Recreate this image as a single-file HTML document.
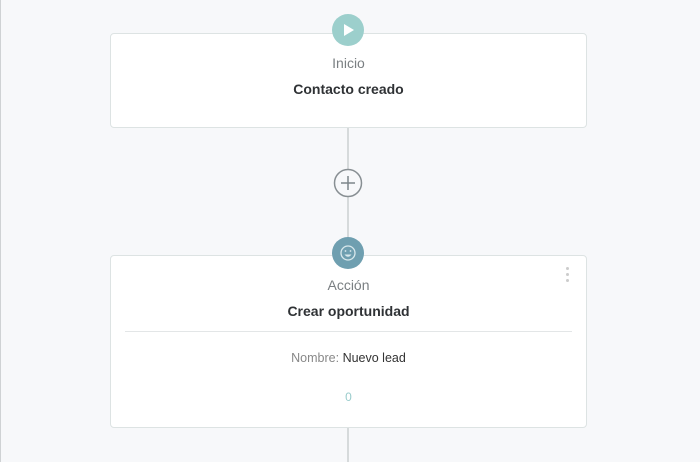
<!DOCTYPE html>
<html><head><style>
body{margin:0;width:700px;height:462px;background:#f7f8fa;position:relative;overflow:hidden;font-family:"Liberation Sans",sans-serif;}
.card{position:absolute;left:110px;width:477px;background:#fff;border:1px solid #dde3e3;border-radius:4px;box-sizing:border-box;text-align:center;}
.line{position:absolute;left:347px;width:2px;background:#d6dadb;}
.t1{position:absolute;width:100%;font-size:14px;color:#7a7f82;}
.t2{position:absolute;width:100%;font-size:14px;font-weight:bold;color:#2f3235;}
</style></head><body>
<div style="position:absolute;left:0;top:0;width:1px;height:462px;background:#cfd2d4"></div>
<div class="line" style="top:127px;height:128px"></div>
<div class="line" style="top:427px;height:35px"></div>
<div class="card" style="top:33px;height:95px">
 <div class="t1" style="top:21px">Inicio</div>
 <div class="t2" style="top:47px">Contacto creado</div>
</div>
<div class="card" style="top:255px;height:173px">
 <div class="t1" style="top:21px">Acción</div>
 <div class="t2" style="top:47px">Crear oportunidad</div>
 <div style="position:absolute;left:14px;right:14px;top:75px;height:1px;background:#e3e6e7"></div>
 <div style="position:absolute;width:100%;top:95px;font-size:12.5px;color:#888"><span>Nombre:</span> <span style="color:#333">Nuevo lead</span></div>
 <div style="position:absolute;width:100%;top:134px;font-size:12px;color:#9cc">0</div>
 <div style="position:absolute;right:17px;top:11px;width:3px">
  <div style="width:3px;height:3px;border-radius:50%;background:#ccc;margin-bottom:3px"></div>
  <div style="width:3px;height:3px;border-radius:50%;background:#ccc;margin-bottom:3px"></div>
  <div style="width:3px;height:3px;border-radius:50%;background:#ccc"></div></div>
</div>
<svg style="position:absolute;left:0;top:0" width="700" height="462">
 <circle cx="348" cy="30" r="16" fill="#9ccfcc"/>
 <path d="M344 24 L354 30 L344 36 Z" fill="#fff"/>
 <circle cx="348" cy="183" r="13.5" fill="#f7f8fa" stroke="#888f93" stroke-width="1.5"/>
 <path d="M341 183 H355 M348 176 V190" stroke="#7d8589" stroke-width="1.5"/>
 <circle cx="348" cy="253" r="16" fill="#6f9fb0"/>
 <circle cx="348" cy="253" r="7" fill="none" stroke="#d8e8ec" stroke-width="1.3"/>
 <path d="M344.5 254.5 Q348 259 351.5 254.5 Z" fill="#d8e8ec"/>
 <circle cx="345.5" cy="251" r="0.9" fill="#d8e8ec"/><circle cx="350.5" cy="251" r="0.9" fill="#d8e8ec"/>
</svg>
</body></html>
